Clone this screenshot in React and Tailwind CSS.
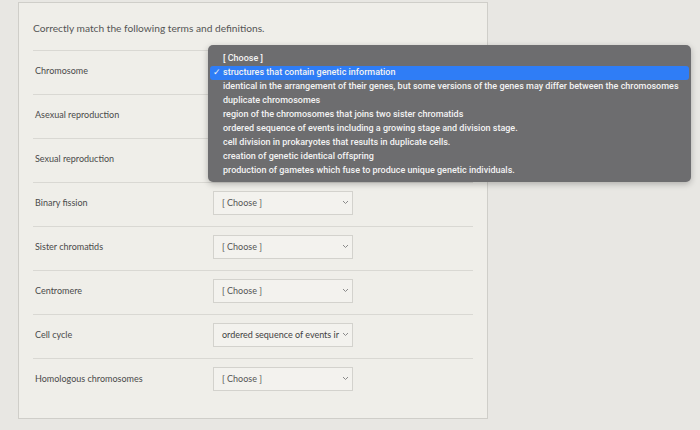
import { useState } from "react";

const terms = [
  { name: "Chromosome", value: "structures that contain genetic information", hidden: true },
  { name: "Asexual reproduction", value: "[ Choose ]", hidden: true },
  { name: "Sexual reproduction", value: "[ Choose ]", hidden: true },
  { name: "Binary fission", value: "[ Choose ]" },
  { name: "Sister chromatids", value: "[ Choose ]" },
  { name: "Centromere", value: "[ Choose ]" },
  { name: "Cell cycle", value: "ordered sequence of events ir" },
  { name: "Homologous chromosomes", value: "[ Choose ]" },
];

const options = [
  "[ Choose ]",
  "structures that contain genetic information",
  "identical in the arrangement of their genes, but some versions of the genes may differ between the chromosomes",
  "duplicate chromosomes",
  "region of the chromosomes that joins two sister chromatids",
  "ordered sequence of events including a growing stage and division stage.",
  "cell division in prokaryotes that results in duplicate cells.",
  "creation of genetic identical offspring",
  "production of gametes which fuse to produce unique genetic individuals.",
];

const Chevron = () => (
  <svg width="7" height="5" viewBox="0 0 7 5" className="shrink-0">
    <path d="M1 1l2.5 2.5L6 1" fill="none" stroke="#8a8a8a" strokeWidth="1" />
  </svg>
);

const Select = ({ value, hidden }) => (
  <div
    className={
      "flex h-[24px] w-[140px] items-center justify-between border border-[#d3d2cd] bg-[#f3f2ee] pl-[8px] pr-[3px] " +
      (hidden ? "invisible" : "")
    }
  >
    <span
      className={
        "whitespace-nowrap text-[9px] " +
        (value === "[ Choose ]" ? "text-[#555]" : "text-[#3f3f3f]")
      }
    >
      {value}
    </span>
    <Chevron />
  </div>
);

export default function App() {
  const [selected] = useState(1);

  return (
    <div className="relative h-[430px] w-[700px] overflow-hidden bg-[#e8e7e3] pl-[18px] pt-[2px] font-['Lato',sans-serif]">
      <div className="h-[417px] w-[470px] border border-[#cfcec9] bg-[#efeee9] px-[14px] pt-[18px]">
        <p className="text-[10.2px] leading-[14px] text-[#555]">
          Correctly match the following terms and definitions.
        </p>

        <div className="mt-[15px]">
          {terms.map((t) => (
            <div
              key={t.name}
              className="flex h-[44px] items-center border-t border-[#d9d8d3] pb-[4px] pl-[2px]"
            >
              <span className="w-[178px] text-[9px] text-[#4a4a4a]">{t.name}</span>
              <Select value={t.value} hidden={t.hidden} />
            </div>
          ))}
        </div>
      </div>

      {/* open select menu */}
      <div className="absolute left-[208px] top-[45px] w-[483px] rounded-[5px] bg-[#6d6d6f] pb-[4px] pt-[7px] shadow-[0_2px_6px_rgba(0,0,0,0.25)] font-['Roboto',sans-serif]">
        {options.map((o, i) => (
          <div
            key={o}
            className={
              "mx-[2px] flex h-[14px] items-center rounded-[3px] pl-[3px] text-[9px] font-medium whitespace-nowrap text-[#f3f3f3] " +
              (i === selected ? "bg-[#2f7df6]" : "")
            }
          >
            <span className="w-[10px]">{i === selected ? "✓" : ""}</span>
            {o}
          </div>
        ))}
      </div>
    </div>
  );
}
